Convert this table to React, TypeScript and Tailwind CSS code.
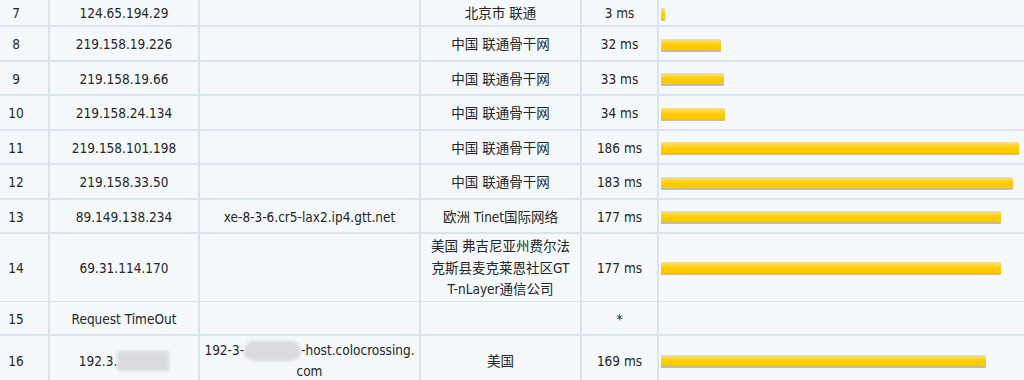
import React from "react";

type Row = {
  hop: string;
  ip: React.ReactNode;
  host: React.ReactNode;
  loc: React.ReactNode;
  ms: string;
  bar: number;
  h: string;
};

const Blur = ({ w, round }: { w: string; round?: boolean }) => (
  <span
    className={`inline-block align-middle h-[20px] ${w} ${round ? "rounded-full" : "rounded-[2px]"} bg-[#d9dbde] blur-[1.5px]`}
  />
);

const rows: Row[] = [
  { hop: "7", ip: "124.65.194.29", host: "", loc: "北京市 联通", ms: "3 ms", bar: 4, h: "h-[25px]" },
  { hop: "8", ip: "219.158.19.226", host: "", loc: "中国 联通骨干网", ms: "32 ms", bar: 60, h: "h-[33px]" },
  { hop: "9", ip: "219.158.19.66", host: "", loc: "中国 联通骨干网", ms: "33 ms", bar: 63, h: "h-[32px]" },
  { hop: "10", ip: "219.158.24.134", host: "", loc: "中国 联通骨干网", ms: "34 ms", bar: 64, h: "h-[33px]" },
  { hop: "11", ip: "219.158.101.198", host: "", loc: "中国 联通骨干网", ms: "186 ms", bar: 358, h: "h-[32px]" },
  { hop: "12", ip: "219.158.33.50", host: "", loc: "中国 联通骨干网", ms: "183 ms", bar: 352, h: "h-[33px]" },
  {
    hop: "13",
    ip: "89.149.138.234",
    host: "xe-8-3-6.cr5-lax2.ip4.gtt.net",
    loc: "欧洲 Tinet国际网络",
    ms: "177 ms",
    bar: 340,
    h: "h-[32px]",
  },
  {
    hop: "14",
    ip: "69.31.114.170",
    host: "",
    loc: (
      <div className="flex flex-col items-center leading-[21.5px]">
        <span>美国 弗吉尼亚州费尔法</span>
        <span>克斯县麦克莱恩社区GT</span>
        <span>T-nLayer通信公司</span>
      </div>
    ),
    ms: "177 ms",
    bar: 340,
    h: "h-[66px]",
  },
  { hop: "15", ip: "Request TimeOut", host: "", loc: "", ms: "*", bar: 0, h: "h-[32px]" },
  {
    hop: "16",
    ip: (
      <span className="flex items-center">
        <span>192.3.</span>
        <Blur w="w-[52px]" />
      </span>
    ),
    host: (
      <div className="flex flex-col items-center leading-[21px]">
        <span className="flex items-center">
          <span>192-3-</span>
          <Blur w="w-[57px]" round />
          <span>-host.colocrossing.</span>
        </span>
        <span>com</span>
      </div>
    ),
    loc: "美国",
    ms: "169 ms",
    bar: 325,
    h: "h-[48px]",
  },
];

export default function App() {
  return (
    <div
      className="w-[1024px] h-[380px] overflow-hidden bg-[#f5f9fb] text-[13.5px] text-[#262626]"
      style={{ fontFamily: "'DejaVu Sans Condensed', Tahoma, 'Liberation Sans', 'Noto Sans CJK SC', sans-serif" }}
    >
      <div className="flex flex-col gap-[2px] bg-[#dae4f1]">
        {rows.map((r) => (
          <div
            key={r.hop}
            className={`grid grid-cols-[48px_148px_219px_159px_75px_1fr] gap-[2px] ${r.h}`}
          >
            <div className="bg-[#f5f9fb] flex items-center justify-center pr-[16px] pt-[2px]">{r.hop}</div>
            <div className="bg-[#f5f9fb] flex items-center justify-center whitespace-nowrap pt-[2px]">{r.ip}</div>
            <div className="bg-[#f5f9fb] flex items-center justify-center whitespace-nowrap pt-[2px]">{r.host}</div>
            <div className="bg-[#f5f9fb] flex items-center justify-center whitespace-nowrap pt-[2px]">{r.loc}</div>
            <div className="bg-[#f5f9fb] flex items-center justify-center whitespace-nowrap pt-[2px]">{r.ms}</div>
            <div className="bg-[#f5f9fb] flex items-center pl-[2px] pt-[3px]">
              {r.bar > 0 && (
                <div
                  className="h-[13px] rounded-r-[1px] bg-[linear-gradient(to_bottom,#ffe27a_0%,#ffd83d_22%,#ffcc00_45%,#ffc800_82%,#b3b3b3_84%,#c4c4c4_100%)]"
                  style={{ width: `${r.bar}px` }}
                />
              )}
            </div>
          </div>
        ))}
      </div>
    </div>
  );
}
